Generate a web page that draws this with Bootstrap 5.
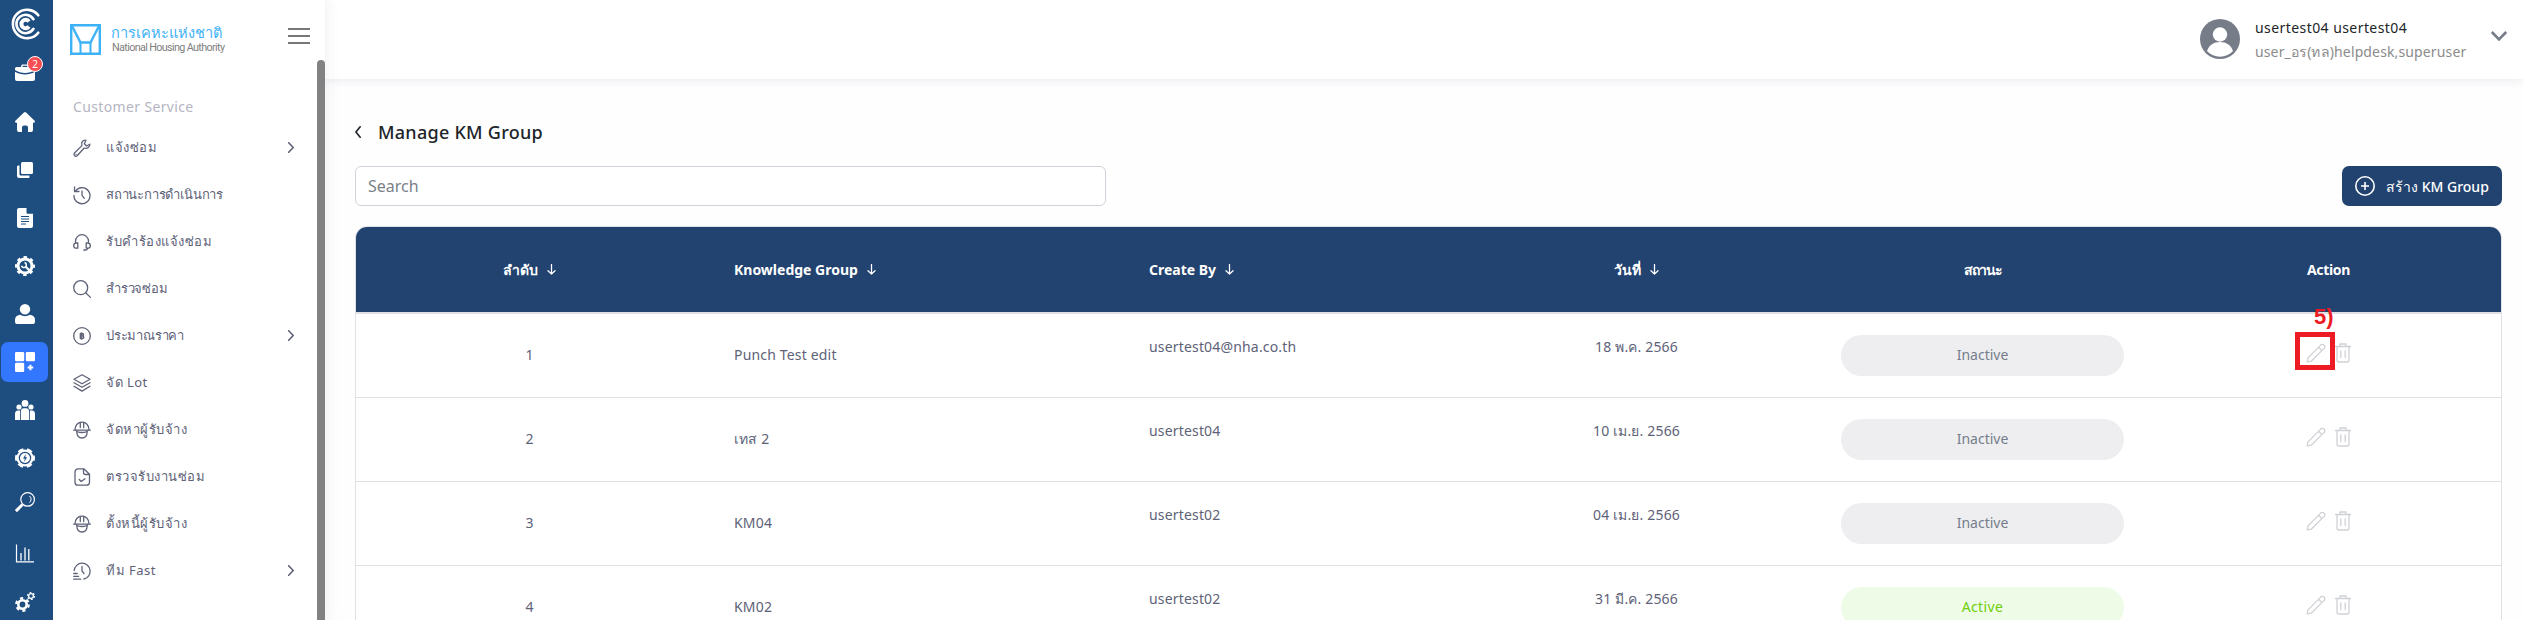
<!DOCTYPE html>
<html lang="th">
<head>
<meta charset="utf-8">
<title>Manage KM Group</title>
<link href="https://cdn.jsdelivr.net/npm/bootstrap@5.3.0/dist/css/bootstrap.min.css" rel="stylesheet">
<style>
body{font-family:"Noto Sans",sans-serif;font-size:14px;color:#5e6278;background:#fefefe;height:620px;overflow:hidden}
svg{display:block;flex:none;overflow:visible}
.rail{width:53px;background:#1e4d80;color:#fff;flex:none}
.rail-link{width:47px;height:40px;margin:4px 2px 4px 1px;border-radius:7px;flex:none}
.rail-link.brief{margin-top:5px;margin-bottom:5px}
.rail-link.current{background:#3377ff}
.rail-link svg{width:20px;height:20px}
.notify{left:26px;top:3px;width:16px;height:16px;border-radius:50%;background:#f64e52;border:1px solid #fff;font-size:10px;line-height:14px;text-align:center}
.side{width:272px;background:#fff;box-shadow:0 0 14px rgba(82,63,105,.1);z-index:3;flex:none}
.side-head{height:60px;padding:24px 15px 0 17px}
.brand-name{margin-left:10px}
.brand-th{font-size:14.6px;line-height:17px;color:#3db2f7;font-weight:500}
.brand-en{font-family:Roboto,sans-serif;font-size:10.8px;line-height:14px;color:#808080;letter-spacing:-.65px;padding-left:1px}
.menu-title{color:#b5b5c3;height:30px;line-height:30px;letter-spacing:.36px;margin:32px 0 2px 20px}
.menu-row{height:47px;padding-left:20px;color:#5e6278}
.menu-row svg.mi{width:18px;height:18px;margin-right:15px}
.menu-row .lbl{font-size:13px;line-height:22px;letter-spacing:.5px;position:relative;top:-1px}
.menu-row .lbl.tight{letter-spacing:-.2px}
.menu-row .chev{margin-left:auto;margin-right:23px;stroke-width:1.600}
.ic{fill:none;stroke:currentColor;stroke-width:1.3;stroke-linecap:round;stroke-linejoin:round}
.thumb{width:8px;background:#828282;border-radius:4px 4px 0 0;flex:none}
.topbar{height:79px;background:#fff;box-shadow:0 0 10px rgba(82,63,105,.15);padding-right:16px}
.avatar{margin-top:19px}
.user-text{margin:16px 0 0 15px;width:212px}
.user-caret{margin:31px 0 0 24px}
.user-name{color:#212529;line-height:24px;letter-spacing:.43px}
.user-role{color:#8b8b8b;line-height:24px;letter-spacing:.13px}
.content{padding:0 21px 0 30px}
.title-row{padding-top:39px}
.page-title{font-size:18px;font-weight:500;color:#212529;line-height:28px;letter-spacing:.27px;margin-left:17px}
.tool-row{padding:20px 0}
.search{width:751px;height:40px;border-radius:6px;border-color:#ced4da;font-size:16px;padding:0 12px}
.search::placeholder{color:#7a8088}
.btn-create{width:160px;height:40px;border-radius:7px;background:#22426f;color:#fff;font-size:14px;font-weight:500;padding:0 12px;gap:11px}
.frame{border:1px solid #dfe1e5;border-radius:12px 12px 0 0;overflow:hidden}
.km{table-layout:fixed;--bs-table-bg:#fff;--bs-table-color:#5e6278}
.km>thead>tr>th{height:86px;background:#22426f;color:#fff;font-weight:700;padding:0 31px 0 32px;border-bottom:2px solid #dee0e3;vertical-align:middle;box-shadow:none}
.km>tbody>tr>td{height:84px;padding:0 31px 0 32px;border-bottom:1px solid #dee0e3;vertical-align:middle;line-height:22px;letter-spacing:.17px}
.km .lift{padding-bottom:17px!important}
.th-in{gap:9px}
.w-num{width:346px}.w-name{width:415px}
.pill{height:41px;line-height:40px;border-radius:21px;background:#eeeef1;color:#757d8a;text-align:center;letter-spacing:0}
.pill.on{background:#eefbe6;color:#6fcf0a;letter-spacing:.4px}
.acts{gap:9px;color:#d0d1d5;position:relative;top:-2px;z-index:2}
.callout{left:-11px;top:-11px;width:40px;height:38px;border:5px solid #ed1c24}
.step{left:8px;top:-38px;font:700 22px/24px "Liberation Sans",Arial,sans-serif;color:#ed1c24;letter-spacing:0}
</style>
</head>
<body class="d-flex">
<svg width="0" height="0" class="position-absolute">
<defs>
<symbol id="pencil" viewBox="0 0 20 20"><path d="M1.2 18.8 2 14.9 14.2 2.6c.9-1.2 2.300-1.900 3.800-.6 1.400 1.400.8 2.900-.4 3.900L5.200 18.200zM12.600 4.300l3.300 3.300"/></symbol>
<symbol id="trash" viewBox="0 0 16 20"><path d="M.5 3.500h15M5 3V1h6v2M2 4v13a2 2 0 0 0 2 2h8a2 2 0 0 0 2-2V4M5.800 8v6.500M10.200 8v6.500"/></symbol>
<symbol id="right" viewBox="0 0 6 11"><path d="M.7.7 5.200 5.500.7 10.300"/></symbol>
<symbol id="down" viewBox="0 0 9 11"><path d="M4.500.5v9.500M1 6.700l3.500 3.400L8 6.700"/></symbol>
<symbol id="helmet" viewBox="0 0 18 18"><path d="M.7 9.200h16.600M2 8.800C2 4.300 5 1.200 9 1.200S16 4.300 16 8.800M7.300 6.500V1.400M10.700 6.500V1.400M3 9.500c1 1.500 3.500 2 6 2s5-.5 6-2M3.800 11c.2 3.800 2.100 6 5.200 6s5-2.200 5.200-6"/></symbol>
</defs>
</svg>

<nav class="rail d-flex flex-column overflow-hidden">
 <div class="rail-link d-flex align-items-center justify-content-center"><svg viewBox="0 0 30 30" style="width:30px;height:30px" fill="none" stroke="#fff"><path d="M28.300 6.300A14.200 14.200 0 1 0 28.300 23.700M23.500 10.200a9.200 9.200 0 1 0 0 9.600" stroke-linecap="round" stroke-width="2.600"/><path d="M19 12.500a4.200 4.200 0 1 0 0 5" stroke-width="4"/></svg></div>
 <div class="rail-link brief d-flex align-items-center justify-content-center position-relative"><svg viewBox="0 0 20 20" fill="#fff"><path d="M6 4c0-2 1-2.500 2-2.500h4c1 0 2 .5 2 2.500h4.500A1.500 1.500 0 0 1 20 5.500V7c-6 4-14 4-20 0V5.500A1.500 1.500 0 0 1 1.500 4zm1.500 0h5c0-1-.5-1.200-1-1.200h-3c-.5 0-1 .2-1 1.200M0 8.700c6 3.600 14 3.600 20 0V16a2 2 0 0 1-2 2H2a2 2 0 0 1-2-2z"/></svg><span class="notify position-absolute">2</span></div>
 <div class="rail-link d-flex align-items-center justify-content-center"><svg viewBox="0 0 20 20" fill="#fff"><path d="M8.900.5a1.600 1.600 0 0 1 2.200 0l8.500 8.300c.8.900.3 2-.8 2h-.8V18a2 2 0 0 1-2 2h-3v-4.500a2 2 0 0 0-2-2h-2a2 2 0 0 0-2 2V20H4a2 2 0 0 1-2-2v-7.200h-.8c-1.100 0-1.600-1.100-.8-2z"/></svg></div>
 <div class="rail-link d-flex align-items-center justify-content-center"><svg viewBox="0 0 20 20" fill="#fff"><rect x="6" y="2" width="12" height="12" rx="1.500"/><path d="M2 7c0-1 .7-1.500 1.500-1.500h1V14c0 1 .6 1.600 1.500 1.600h8.500v.9c0 1-.5 1.500-1.500 1.500H4a2 2 0 0 1-2-2z"/></svg></div>
 <div class="rail-link d-flex align-items-center justify-content-center"><svg viewBox="0 0 20 20"><path fill="#fff" d="M4 0h7.500v4.500c0 .8.500 1.300 1.300 1.300H18V18a2 2 0 0 1-2 2H4a2 2 0 0 1-2-2V2a2 2 0 0 1 2-2"/><path stroke="#1e4d80" d="M6 8.500h8M6 11h8M6 13.500h8M6 16h5"/></svg></div>
 <div class="rail-link d-flex align-items-center justify-content-center"><svg viewBox="0 0 20 20" fill="none"><circle cx="10" cy="10" r="7" stroke="#fff" stroke-width="3"/><circle cx="10" cy="10" r="8.700" stroke="#fff" stroke-width="2.600" stroke-dasharray="3.400 3.430" stroke-dashoffset="1.700"/><path d="M10.500 10.500l4 4" stroke="#fff" stroke-width="2.200"/><path d="M9.500 6.600a2.500 2.500 0 1 1-3 3.200" stroke="#fff" stroke-width="1.600"/></svg></div>
 <div class="rail-link d-flex align-items-center justify-content-center"><svg viewBox="0 0 20 20" fill="#fff"><circle cx="10" cy="5.200" r="5.200"/><path d="M5 10.800c3 1.800 7 1.800 10 0 3.500.5 5 2.500 5 5.200V18a2 2 0 0 1-2 2H2a2 2 0 0 1-2-2v-2c0-2.700 1.500-4.700 5-5.200"/></svg></div>
 <div class="rail-link current d-flex align-items-center justify-content-center"><svg viewBox="0 0 20 20" fill="#fff"><rect width="9.200" height="9.200" rx="1.200"/><rect x="10.800" width="9.200" height="9.200" rx="1.200"/><rect y="10.800" width="9.200" height="9.200" rx="1.200"/><path d="M15.400 12.700v5.600M12.600 15.500h5.600" stroke="#fff" stroke-width="2"/></svg></div>
 <div class="rail-link d-flex align-items-center justify-content-center"><svg viewBox="0 0 20 20" fill="#fff"><circle cx="10" cy="3.400" r="3.400"/><circle cx="4" cy="7" r="2.600"/><circle cx="16" cy="7" r="2.600"/><path d="M5.800 20V11.500c0-2 1.200-3.300 3-3.300h2.400c1.800 0 3 1.300 3 3.300V20zM0 20v-6c0-2 1-3.500 3-3.500h2V20zM20 20v-6c0-2-1-3.500-3-3.500h-2V20z"/></svg></div>
 <div class="rail-link d-flex align-items-center justify-content-center"><svg viewBox="0 0 20 20" fill="none"><circle cx="10" cy="10" r="8.500" fill="#fff"/><circle cx="10" cy="10" r="8.700" stroke="#fff" stroke-width="2.600" stroke-dasharray="5.400 3.700" stroke-dashoffset="2.700"/><circle cx="10" cy="10" r="5.600" stroke="#1e4d80" stroke-width="1.200"/><path d="M10.800 6 8 10.600h1.800L9.200 14l2.900-4.700h-1.800z" fill="#1e4d80"/></svg></div>
 <div class="rail-link d-flex align-items-center justify-content-center mt-0"><svg viewBox="0 0 20 20" fill="none" stroke="#fff"><circle cx="12.600" cy="7.400" r="6.800" stroke-width="1.200"/><path d="M7.500 12.500.9 19.100" stroke-width="3"/><path d="M14.500 4a4.200 4.200 0 0 1 0 6.600"/></svg></div>
 <div class="rail-link d-flex align-items-center justify-content-center mt-2"><svg viewBox="0 0 20 20" fill="none" stroke="#fff"><path d="M1.500.5v17.300h17.500" stroke-width="1.200"/><path d="M6 16.500V9M10 16.500V3.500M13.800 16.500V5" stroke-width="1.300"/></svg></div>
 <div class="rail-link d-flex align-items-center justify-content-center mb-0"><svg viewBox="0 0 20 20" fill="none" stroke="#fff"><circle cx="7.500" cy="12.500" r="4.200" stroke-width="2.600"/><circle cx="7.500" cy="12.500" r="6.300" stroke-width="2.200" stroke-dasharray="3.200 3.400"/><circle cx="16" cy="4" r="2.400" stroke-width="1.300"/><circle cx="16" cy="4" r="3.500" stroke-width="1.200" stroke-dasharray="1.800 1.860"/></svg></div>
</nav>

<aside class="side d-flex flex-column">
 <div class="side-head d-flex align-items-start">
  <svg width="31" height="31" viewBox="0 0 31 31" fill="none" stroke="#3db2f7" stroke-width="2"><path d="M1.200 1.200h28.600v28.600H1.200z" stroke-width="2.400"/><path d="M2 2l8.500 16.500h10L29 2" stroke-width="2.400"/><path d="M10.500 18.500V30M20.500 18.500V30"/></svg>
  <div class="brand-name"><div class="brand-th text-nowrap">การเคหะแห่งชาติ</div><div class="brand-en text-nowrap">National Housing Authority</div></div>
  <svg class="ms-auto" width="22" height="24" viewBox="0 0 22 24" stroke="#777" stroke-width="1.800"><path d="M0 5h22M0 12h22M0 19h22"/></svg>
 </div>
 <div class="d-flex flex-grow-1">
  <div class="flex-grow-1">
   <div class="menu-title">Customer Service</div>
   <div class="menu-row d-flex align-items-center"><svg class="ic mi" viewBox="0 0 18 18"><path d="M16.800 5.200 13.600 7l-2.300-2.200L13 1.300C10 .6 7.800 3.400 8.900 6.600L1.500 14c-1.600 1.700.7 4.300 2.600 2.700L11.200 9c3.200 1 6-1 5.600-3.800M3 15.300h.1"/></svg><span class="lbl">แจ้งซ่อม</span><svg class="ic chev" width="6" height="11"><use href="#right"/></svg></div>
   <div class="menu-row d-flex align-items-center"><svg class="ic mi" viewBox="0 0 18 18"><path d="M2.200 5.500A8 8 0 1 1 1 9.500M1.500 1v4.500H6M9 5v4.300l2.300 3"/></svg><span class="lbl tight">สถานะการดำเนินการ</span></div>
   <div class="menu-row d-flex align-items-center"><svg class="ic mi" viewBox="0 0 18 18"><path d="M2.500 10V8.200a6.500 6.500 0 0 1 13 0V10M4.800 10v5.200H3.300C1.600 15.200.7 14 .7 12.700S1.600 10 3.300 10zM13.200 10v5.200h1.500c1.700 0 2.600-1.200 2.600-2.500S16.400 10 14.700 10zM14.500 15.500c0 1-.8 1.500-1.700 1.500h-2"/></svg><span class="lbl">รับคำร้องแจ้งซ่อม</span></div>
   <div class="menu-row d-flex align-items-center"><svg class="ic mi" viewBox="0 0 18 18"><circle cx="7.700" cy="7.700" r="7"/><path d="M12.700 12.700l4.700 4.700"/></svg><span class="lbl tight">สำรวจซ่อม</span></div>
   <div class="menu-row d-flex align-items-center"><svg class="ic mi" viewBox="0 0 18 18"><circle cx="9" cy="9" r="8.300"/><path d="M7.300 6.500v5h2.200a1.300 1.300 0 0 0 0-2.600H7.300h2a1.200 1.200 0 0 0 0-2.400zM8.700 5.800v6.400"/></svg><span class="lbl tight">ประมาณราคา</span><svg class="ic chev" width="6" height="11"><use href="#right"/></svg></div>
   <div class="menu-row d-flex align-items-center"><svg class="ic mi" viewBox="0 0 18 18"><path d="M9 .8l8 4.500-8 4.500-8-4.500zM1 8.700l8 4.500 8-4.500M1 12.300l8 4.800 8-4.800"/></svg><span class="lbl">จัด Lot</span></div>
   <div class="menu-row d-flex align-items-center"><svg class="ic mi"><use href="#helmet"/></svg><span class="lbl">จัดหาผู้รับจ้าง</span></div>
   <div class="menu-row d-flex align-items-center"><svg class="ic mi" viewBox="0 0 18 18"><path d="M10.800.8H5A3 3 0 0 0 2 3.800v10.400a3 3 0 0 0 3 3h8.500a3 3 0 0 0 3-3V6.300zM10.500 1v3.500a2 2 0 0 0 2 2h3.700M6.200 11.500l2 2L12 10.800"/></svg><span class="lbl">ตรวจรับงานซ่อม</span></div>
   <div class="menu-row d-flex align-items-center"><svg class="ic mi"><use href="#helmet"/></svg><span class="lbl">ตั้งหนี้ผู้รับจ้าง</span></div>
   <div class="menu-row d-flex align-items-center"><svg class="ic mi" viewBox="0 0 18 18"><path d="M1.200 8.500A8 8 0 1 1 11 17M9 4.500V9l2 2.500M.7 11.500h3.500M.7 14.300h5M.7 17.200h7"/></svg><span class="lbl">ทีม Fast</span><svg class="ic chev" width="6" height="11"><use href="#right"/></svg></div>
  </div>
  <div class="thumb"></div>
 </div>
</aside>

<div class="flex-grow-1 d-flex flex-column overflow-hidden">
 <header class="topbar d-flex justify-content-end flex-shrink-0">
  <svg class="avatar" width="40" height="40" viewBox="0 0 40 40"><circle cx="20" cy="20" r="20" fill="#777c89"/><circle cx="20" cy="15.500" r="7.200" fill="#fff"/><path d="M7 32c2-6 7-9 13-9s11 3 13 9c-7 7.500-19 7.500-26 0" fill="#fff"/></svg>
  <div class="user-text text-nowrap"><div class="user-name">usertest04 usertest04</div><div class="user-role">user_อร(ทล)helpdesk,superuser</div></div>
  <svg class="user-caret" width="16" height="10" viewBox="0 0 16 10" fill="none" stroke="#777c89" stroke-width="2.600"><path d="M.8 1 8 8.300 15.200 1"/></svg>
 </header>
 <main class="content flex-shrink-0">
  <div class="title-row d-flex align-items-center"><svg class="ic text-dark" width="6" height="12" viewBox="0 0 6 12" style="stroke-width:1.700"><path d="M5.200.8.900 6l4.300 5.200"/></svg><h1 class="page-title mb-0">Manage KM Group</h1></div>
  <div class="tool-row d-flex justify-content-between"><input class="form-control search" placeholder="Search"><button class="btn btn-create d-flex align-items-center"><svg width="20" height="20" viewBox="0 0 20 20" fill="none" stroke="#fff" stroke-width="1.600"><circle cx="10" cy="10" r="9.200"/><path d="M10 6v8M6 10h8"/></svg><span class="text-nowrap">สร้าง KM Group</span></button></div>
  <div class="frame">
   <table class="table km mb-0">
    <colgroup><col class="w-num"><col class="w-name"><col class="w-num"><col class="w-num"><col class="w-num"><col></colgroup>
    <thead><tr>
     <th><div class="th-in d-flex align-items-center justify-content-center"><span>ลำดับ</span><svg class="ic" width="9" height="11"><use href="#down"/></svg></div></th>
     <th><div class="th-in d-flex align-items-center"><span>Knowledge Group</span><svg class="ic" width="9" height="11"><use href="#down"/></svg></div></th>
     <th><div class="th-in d-flex align-items-center"><span>Create By</span><svg class="ic" width="9" height="11"><use href="#down"/></svg></div></th>
     <th><div class="th-in d-flex align-items-center justify-content-center"><span>วันที่</span><svg class="ic" width="9" height="11"><use href="#down"/></svg></div></th>
     <th class="text-center" style="letter-spacing:-1px">สถานะ</th>
     <th class="text-center" style="letter-spacing:-.3px">Action</th>
    </tr></thead>
    <tbody id="rows"></tbody>
   </table>
  </div>
 </main>
</div>
<script src="https://cdn.jsdelivr.net/npm/bootstrap@5.3.0/dist/js/bootstrap.bundle.min.js"></script>
<script>
const groups = [
  ['1','Punch Test edit','usertest04@nha.co.th','18 พ.ค. 2566',false],
  ['2','เทส 2','usertest04','10 เม.ย. 2566',false],
  ['3','KM04','usertest02','04 เม.ย. 2566',false],
  ['4','KM02','usertest02','31 มี.ค. 2566',true]
];
document.getElementById('rows').innerHTML = groups.map((g, i) => `<tr>
<td class="text-center">${g[0]}</td><td>${g[1]}</td><td class="lift">${g[2]}</td><td class="lift text-center">${g[3]}</td>
<td><div class="pill${g[4] ? ' on' : ''}">${g[4] ? 'Active' : 'Inactive'}</div></td>
<td><div class="acts d-flex justify-content-center"><span class="position-relative"><svg class="ic" width="20" height="20"><use href="#pencil"/></svg>${i ? '' : '<span class="callout position-absolute"></span><span class="step position-absolute">5)</span>'}</span><svg class="ic" width="16" height="20"><use href="#trash"/></svg></div></td></tr>`).join('');
</script>
</body>
</html>
